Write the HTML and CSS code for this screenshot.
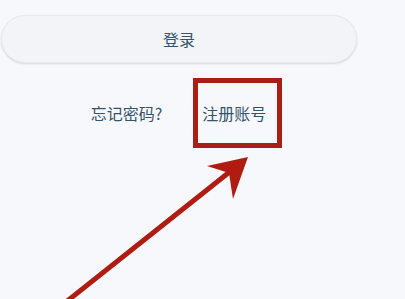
FILE: index.html
```html
<!DOCTYPE html>
<html lang="zh">
<head>
<meta charset="utf-8">
<link rel="stylesheet" href="styles.css">
</head>
<body>
<div class="page">
  <button class="login-btn">登录</button>
  <div class="links">
    <a class="link">忘记密码?</a>
    <a class="link">注册账号</a>
  </div>
</div>
<svg class="annotation" width="405" height="299" viewBox="0 0 405 299">
  <rect x="195.5" y="80.5" width="84" height="65" fill="none" stroke="#a81f18" stroke-width="5"/>
  <line x1="66" y1="302" x2="232" y2="170" stroke="#b01c12" stroke-width="5"/>
  <polygon points="248,157 207,166 229,173 233,199" fill="#b01c12"/>
</svg>
</body>
</html>
```
FILE: styles.css
```css
html, body {
  margin: 0;
  padding: 0;
  background: #f7f8fc;
  width: 405px;
  height: 299px;
  overflow: hidden;
}
.page {
  font-family: "Noto Sans CJK SC", "Noto Sans", sans-serif;
  padding-top: 15px;
  padding-left: 1px;
}
.login-btn {
  display: block;
  width: 356px;
  height: 48px;
  border-radius: 24px;
  border: 1px solid #e6e9ee;
  background: #f2f4f8;
  box-shadow: 0 1px 2px rgba(60, 70, 90, 0.18);
  font-family: inherit;
  font-size: 16px;
  font-weight: 400;
  color: #33546b;
  padding: 0;
  margin: 0;
}
.links {
  display: flex;
  justify-content: center;
  gap: 40px;
  margin-top: 38px;
  padding-right: 49px;
}
.link {
  font-size: 16px;
  font-weight: 400;
  line-height: 24px;
  color: #33546b;
}
.annotation {
  position: absolute;
  left: 0;
  top: 0;
}
```
